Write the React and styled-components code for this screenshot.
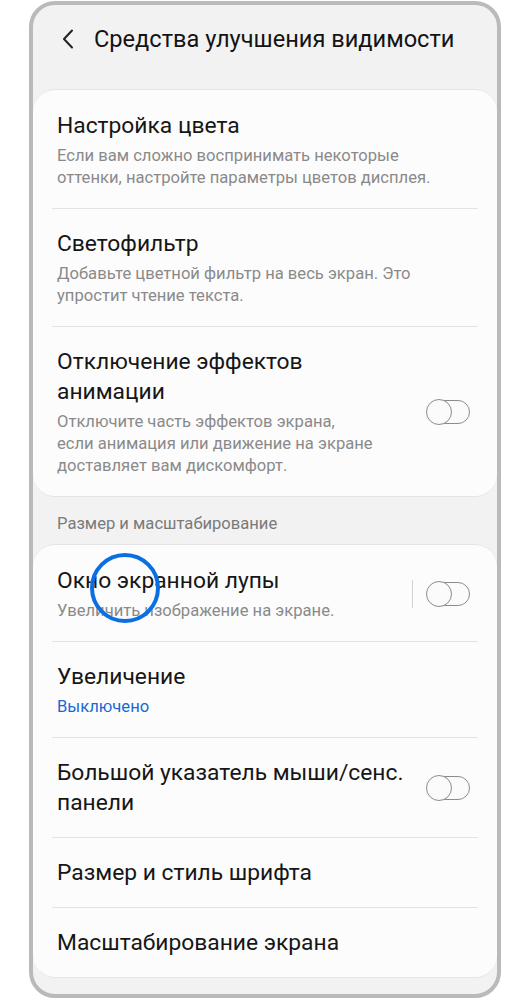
import React from "react";
import styled, { createGlobalStyle } from "styled-components";

const GlobalStyle = createGlobalStyle`
  body {
    margin: 0;
    background: #ffffff;
    font-family: Roboto, "Noto Sans", "Liberation Sans", sans-serif;
  }
`;

const Phone = styled.div`
  box-sizing: border-box;
  width: 472px;
  height: 997px;
  margin: 1px 0 0 29px;
  border: 4px solid #bababa;
  border-radius: 26px;
  background: #f2f2f2;
  overflow: hidden;
`;

const Header = styled.div`
  box-sizing: border-box;
  height: 84px;
  display: flex;
  align-items: flex-start;
  padding: 19px 0 0 26px;
`;

const Back = styled.button`
  display: flex;
  align-items: center;
  justify-content: center;
  width: 18px;
  height: 30px;
  padding: 0;
  margin-right: 17px;
  background: none;
  border: none;
`;

const HeaderTitle = styled.h1`
  margin: 0;
  font-size: 23.6px;
  line-height: 30px;
  font-weight: 400;
  color: #141414;
`;

const Card = styled.div`
  background: #fcfcfc;
  border-radius: 22px;
  border-top: 1px solid #e4e4e4;
  border-bottom: 1px solid #e4e4e4;
  padding-top: 1px;
`;

const Row = styled.div`
  position: relative;
  display: flex;
  align-items: center;
  padding: 20px 27px 19px 24px;
`;

const Texts = styled.div`
  flex: 1;
  display: flex;
  flex-direction: column;
  gap: 4px;
`;

const Title = styled.div`
  font-size: 22.8px;
  line-height: 30px;
  color: #161616;
`;

const Sub = styled.div`
  font-size: 16.6px;
  line-height: 22px;
  color: ${({ $accent }) => ($accent ? "#1769d6" : "#8a8a8a")};
`;

const Divider = styled.div`
  height: 1px;
  margin: 0 19px;
  background: #e3e3e3;
`;

const Section = styled.div`
  padding: 17px 0 10px 24px;
  font-size: 16.6px;
  line-height: 20px;
  color: #7a7a7a;
`;

const Separator = styled.div`
  width: 1.5px;
  height: 28px;
  background: #d2d2d2;
  margin-right: 14px;
`;

const Track = styled.div`
  position: relative;
  box-sizing: border-box;
  width: 43px;
  height: 24px;
  border: 1.5px solid #8c8c8c;
  border-radius: 12px;
  background: #fbfbfb;
`;

const Thumb = styled.div`
  position: absolute;
  left: -2px;
  top: -2.5px;
  box-sizing: border-box;
  width: 26px;
  height: 26px;
  border: 1.5px solid #8c8c8c;
  border-radius: 50%;
  background: #fbfbfb;
`;

const Highlight = styled.div`
  position: absolute;
  left: 57px;
  top: 7px;
  box-sizing: border-box;
  width: 70px;
  height: 70px;
  border: 4.5px solid #0b6fe4;
  border-radius: 50%;
  pointer-events: none;
`;

const Toggle = () => (
  <Track>
    <Thumb />
  </Track>
);

const Item = ({ title, sub, accent, toggle, separator, children }) => (
  <Row>
    <Texts>
      <Title>{title}</Title>
      {sub && <Sub $accent={accent}>{sub}</Sub>}
    </Texts>
    {separator && <Separator />}
    {toggle && <Toggle />}
    {children}
  </Row>
);

export default function App() {
  return (
    <>
      <GlobalStyle />
      <Phone>
        <Header>
          <Back aria-label="Назад">
            <svg width="12" height="20" viewBox="0 0 12 20">
              <polyline
                points="10,1.5 2,10 10,18.5"
                fill="none"
                stroke="#222"
                strokeWidth="2"
                strokeLinecap="round"
                strokeLinejoin="round"
              />
            </svg>
          </Back>
          <HeaderTitle>Средства улучшения видимости</HeaderTitle>
        </Header>

        <Card>
          <Item
            title="Настройка цвета"
            sub={<>Если вам сложно воспринимать некоторые<br />оттенки, настройте параметры цветов дисплея.</>}
          />
          <Divider />
          <Item
            title="Светофильтр"
            sub={<>Добавьте цветной фильтр на весь экран. Это<br />упростит чтение текста.</>}
          />
          <Divider />
          <Item
            title={<>Отключение эффектов<br />анимации</>}
            sub={<>Отключите часть эффектов экрана,<br />если анимация или движение на экране<br />доставляет вам дискомфорт.</>}
            toggle
          />
        </Card>

        <Section>Размер и масштабирование</Section>

        <Card>
          <Item
            title="Окно экранной лупы"
            sub="Увеличить изображение на экране."
            separator
            toggle
          >
            <Highlight />
          </Item>
          <Divider />
          <Item title="Увеличение" sub="Выключено" accent />
          <Divider />
          <Item title={<>Большой указатель мыши/сенс.<br />панели</>} toggle />
          <Divider />
          <Item title="Размер и стиль шрифта" />
          <Divider />
          <Item title="Масштабирование экрана" />
        </Card>
      </Phone>
    </>
  );
}
